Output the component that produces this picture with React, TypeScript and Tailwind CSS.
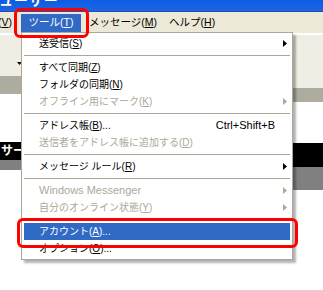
const Arrow = ({ off }: { off?: boolean }) => (
  <svg width="4" height="7" viewBox="0 0 4 7" className="ml-auto">
    <path d="M0 0 L4 3.5 L0 7 Z" fill={off ? "#ACA899" : "#000"} />
  </svg>
);

const Sep = () => (
  <div className="h-[7px] flex items-center">
    <div className="h-px w-full bg-[#ACA899]" />
  </div>
);

type RowProps = {
  label: React.ReactNode;
  off?: boolean;
  sub?: boolean;
  hot?: boolean;
  keys?: string;
};

const Row = ({ label, off, sub, hot, keys }: RowProps) => (
  <div
    className={`h-[17px] flex items-center pl-[15px] pr-[3px] ${
      hot ? "bg-[#316AC5] text-white" : off ? "text-[#ACA899]" : "text-black"
    }`}
  >
    <span className="whitespace-nowrap">{label}</span>
    {keys && <span className="ml-auto mr-[12px] text-[11px]">{keys}</span>}
    {sub && <Arrow off={off} />}
  </div>
);

export default function App() {
  return (
    <div className="relative w-[323px] h-[290px] overflow-hidden bg-white text-[10px] leading-none font-['Liberation_Sans','Noto_Sans_CJK_JP',sans-serif]">
      {/* title bar */}
      <div className="h-[12px] overflow-hidden bg-gradient-to-b from-[#0a5ce8] to-[#2164dc] border-b border-[#1b4fc0]">
        <div className="-mt-[8px] -ml-[1px] text-white font-bold text-[14px] leading-[16px] tracking-[1px]">
          ューザー
        </div>
      </div>

      {/* menu bar */}
      <div className="h-[21px] bg-[#ECE9D8] flex items-center text-[10.5px]">
        <div className="w-[21px] -ml-[2px]">
          (<u>V</u>)
        </div>
        <div className="w-[60px] h-[18px] ml-[2px] flex items-center justify-center bg-[#316AC5] text-white">
          ツール(<u>T</u>)
        </div>
        <div className="ml-[8px]">
          メッセージ(<u>M</u>)
        </div>
        <div className="ml-[12px]">
          ヘルプ(<u>H</u>)
        </div>
      </div>

      {/* panes behind the menu */}
      <div className="flex">
        <div className="w-[150px] flex flex-col">
          <div className="h-[43px] bg-[#EFEDE4] border-t-2 border-white relative">
            <svg width="5" height="3" viewBox="0 0 5 3" className="absolute left-[17px] top-[27px]">
              <path d="M0 0 H5 L2.5 3 Z" fill="#000" />
            </svg>
          </div>
          <div className="h-[18px] bg-[#AEAB9F]" />
          <div className="h-[48px] bg-white" />
          <div className="h-[18px] bg-black text-white font-bold text-[12px] flex items-center pl-[1px]">
            サー・
          </div>
          <div className="h-[10px] bg-[#808080]" />
        </div>
        <div className="flex-1 flex flex-col">
          <div className="h-[55px] bg-[#EFEDE4] border-t-2 border-white" />
          <div className="h-[14px] bg-[#AEAB9F]" />
          <div className="h-[41px] bg-white" />
          <div className="h-[24px] bg-black" />
          <div className="h-[23px] bg-[#808080]" />
        </div>
      </div>

      {/* dropdown menu */}
      <div className="absolute left-[21px] top-[32px] w-[272px] bg-white border border-[#ACA899] p-[2px] shadow-[3px_3px_2px_rgba(0,0,0,0.3)]">
        <Row label={<>送受信(<u>S</u>)</>} sub />
        <Sep />
        <Row label={<>すべて同期(<u>Z</u>)</>} />
        <Row label={<>フォルダの同期(<u>N</u>)</>} />
        <Row label={<>オフライン用にマーク(<u>K</u>)</>} off sub />
        <Sep />
        <Row label={<>アドレス帳(<u>B</u>)...</>} keys="Ctrl+Shift+B" />
        <Row label={<>送信者をアドレス帳に追加する(<u>D</u>)</>} off />
        <Sep />
        <Row label={<>メッセージ ルール(<u>R</u>)</>} sub />
        <Sep />
        <Row label={<span className="text-[11px]">Windows Messenger</span>} off sub />
        <Row label={<>自分のオンライン状態(<u>Y</u>)</>} off sub />
        <Sep />
        <Row label={<>アカウント(<u>A</u>)...</>} hot />
        <Row label={<>オプション(<u>O</u>)...</>} />
      </div>

      {/* red annotation frames */}
      <div className="absolute left-[14px] top-[8px] w-[75px] h-[30px] border-[3px] border-[#FF0000] rounded-[6px]" />
      <div className="absolute left-[17px] top-[218px] w-[281px] h-[30px] border-[3px] border-[#FF0000] rounded-[6px]" />
    </div>
  );
}
